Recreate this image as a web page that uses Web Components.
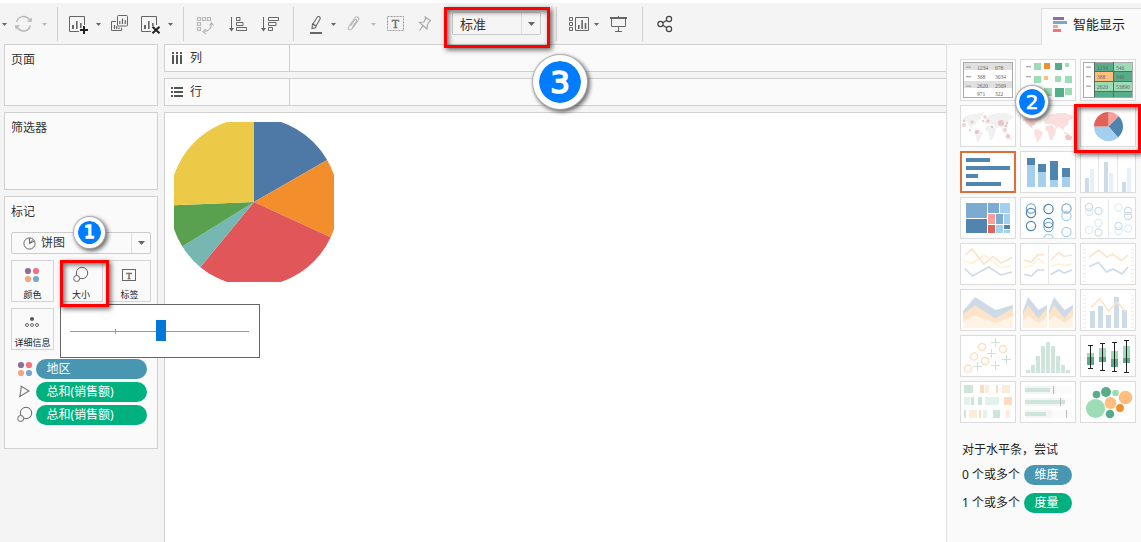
<!DOCTYPE html>
<html lang="zh-CN">
<head>
<meta charset="utf-8">
<title>工作表</title>
<style>
html,body{margin:0;height:100%;overflow:hidden;background:#f4f4f4}
body{font:12px/18px "Noto Sans","Noto Sans CJK SC",sans-serif;color:#333}
</style>
</head>
<body>
<viz-app></viz-app>
<script>
const define = (name, html, setup) => customElements.define(name, class extends HTMLElement {
  constructor() {
    super();
    const t = document.createElement('template');
    t.innerHTML = html;
    this.attachShadow({mode: 'open'}).append(t.content.cloneNode(true));
  }
  connectedCallback() { if (setup) setup(this, this.shadowRoot); }
});

/* ---------- toolbar icons: drawn in toolbar coordinates, [x, width, markup] ---------- */
const G = '#666', L = '#b9b9b9';
const caret = (x, c) => `<path d="M${x} 23h5l-2.500 3z" fill="${c}"/>`;
const s = (c, w = 1) => `fill="none" stroke="${c}" stroke-width="${w}"`;
const ICONS = {
  more: [0, 8, caret(2, G)],
  refresh: [14, 19, `<path d="M16.7 22a7 7 0 0 1 12.7-2.3M30.3 25.5a7 7 0 0 1-12.8 2.2" ${s(L, 1.5)}/><path d="M27 22l5.3-.5-1-4zM20 25l-5.3.5 1.2 4z" fill="${L}"/>`],
  caretL1: [42, 5, caret(42, L)],
  newSheet: [68, 21, `<path d="M79 31.5h-9.500v-15h15v8.500" ${s(G)}/><path d="M72 25h2v4h-2zM76 21h1.600v8H76zM80 23h1.600v5H80z" fill="${G}"/><path d="M84 26v8M80 30h8" ${s('#222', 2)}/>`],
  caret1: [96, 5, caret(96, G)],
  duplicate: [110, 19, `<path d="M116 21.500h-4.500v9h10v-3" ${s(G)}/><rect x="117.500" y="15.500" width="10" height="10.500" rx="1" ${s(G)}/><path d="M119.800 21v3M122.500 18.500v5.500M125.300 20v4M114.500 25v4M116.700 26v3M119 27.500v1.500" ${s(G, 1.2)}/>`],
  clear: [140, 21, `<path d="M151 31.500h-9.500v-15h15v8.500" ${s(G)}/><path d="M144 25h2v4h-2zM148 21h1.600v8H148zM152 23h1.600v3H152z" fill="${G}"/><path d="M152.500 26.800l7 6.500M159.500 26.800l-7 6.500" ${s('#222', 2)}/>`],
  caret2: [168, 5, caret(168, G)],
  swap: [196, 19, `<path d="M197.500 17.500h3v3h-3zM202.500 17.500h3v3h-3zM207.500 17.500h3v3h-3zM197.500 22.500h3v3h-3zM197.500 27.500h3v3h-3zM211.500 23.500q0 7-7 8M209.500 25.500l2-3 2 3M206 29l-3 2.500 3 2.500" ${s(L, 1.2)}/>`],
  asc: [228, 20, `<path d="M231.500 17v12" ${s(G)}/><path d="M229 28h5l-2.500 3.500z" fill="${G}"/><path d="M236.500 17.500h3.500v3h-3.500zM236.500 22.500h6.500v3h-6.500zM236.500 27.500h10v3h-10z" ${s(G)}/>`],
  desc: [260, 20, `<path d="M263.500 17v12" ${s(G)}/><path d="M261 28h5l-2.500 3.500z" fill="${G}"/><path d="M268.500 17.500h10v3h-10zM268.500 22.500h7.500v3h-7.500zM268.500 27.500h4v3h-4z" ${s(G)}/>`],
  pen: [309, 14, `<path d="M313 24l4-6.500q1-1.500 2.500-.7 1.300 1 .5 2.400l-4 6.800zM312.500 24l3.500 2.200-.5 1.500-3.500.8z" ${s(G, 1.1)}/><path d="M310 33h12" ${s(G, 2)}/>`],
  caret3: [331, 5, caret(331, G)],
  clip: [346, 15, `<path d="M356.500 22l-4.500 6.500q-1.500 2-3 1-1.500-1.200-.2-3l6-8.500q1.500-2 3.200-.8 1.600 1.200.2 3.300l-6 8.300M350.500 26l4.300-6q.8-1 1.500-.4.800.6.100 1.600l-4 5.600" ${s(L, 1.1)}/>`],
  caretL2: [371, 5, caret(371, L)],
  label: [387, 17, `<rect x="387.500" y="16.500" width="16" height="14" ${s('#999')} stroke-dasharray="2 1"/><text x="395.500" y="28" text-anchor="middle" font-family="Liberation Serif,serif" font-size="12" fill="#666" stroke="#666" stroke-width=".3">T</text>`],
  pin: [418, 14, `<path d="M424.500 16.500l6.500 4.500M426 17.500l-2 4.500-4.500.5 7.500 6.500.5-4.500 2.700-4M423 25.500l-3.300 5" ${s('#aaa', 1.2)}/>`],
  cards: [568, 22, `<path d="M569.500 17.500h3v3h-3zM569.500 22.500h3v3h-3zM569.500 27.500h3v3h-3zM575.500 17.500h13v13h-13z" ${s(G)}/><path d="M578 25h1.600v4H578zM581.300 20h1.600v9h-1.600zM584.700 23h1.600v6h-1.600z" fill="${G}"/>`],
  caret4: [594, 5, caret(594, G)],
  present: [610, 18, `<path d="M610 18h17" ${s(G, 2)}/><path d="M611.500 18v8.500h14V18M618.500 17v-1M618.500 26.500v5M615 31.500h7" ${s(G)}/>`],
  share: [656, 17, `<circle cx="660.500" cy="24" r="2.600" ${s('#444', 1.2)}/><circle cx="669" cy="19" r="2.600" ${s('#444', 1.2)}/><circle cx="669" cy="29" r="2.600" ${s('#444', 1.2)}/><path d="M662.800 22.700l4-2.400M662.800 25.300l4 2.400" ${s('#444', 1.2)}/>`]
};
define('tool-icon', '<style>:host{display:block;flex:none;height:24px}svg{display:block}</style>', (el, r) => {
  const [x, w, m] = ICONS[el.getAttribute('name')];
  r.innerHTML += `<svg width="${w}" height="24" viewBox="${x} 12 ${w} 24">${m}</svg>`;
});
define('tool-sep', '<style>:host{display:block;flex:none;width:1px;height:34px;background:#d0d0d0}</style>');

define('drop-down', `<style>
:host{display:flex;box-sizing:border-box;border:1px solid #ccc;border-radius:2px;background:var(--bg,#f5f5f5);align-items:center}
.v{flex:1;display:flex;align-items:center}
.b{align-self:stretch;width:18px;border-left:1px solid #dcdcdc;display:flex;align-items:center;justify-content:center}
svg{display:block}</style>
<div class="v"><slot></slot></div><div class="b"><svg width="7" height="4"><path d="M0 0h7l-3.500 4z" fill="#666"/></svg></div>`);

define('tool-bar', `<style>
:host{display:flex;box-sizing:border-box;height:44px;border-top:3px solid #fff;background:#f4f4f4;align-items:center;position:relative;z-index:1}
drop-down{width:89px;height:23px;margin-left:20px;font-size:13px;color:#333}
drop-down span{padding-left:7px}
.tab{margin-left:auto;align-self:flex-end;width:100px;height:37px;margin-bottom:-1px;box-sizing:border-box;border:solid #ddd;border-width:1px 0 0 1px;background:#fafafa;display:flex;align-items:center;padding:0 0 6px 10px;font-size:13px;color:#222}
.tab svg{margin-top:1px}
.tab span{margin-left:6px;white-space:nowrap}
</style>
<tool-icon name="more"></tool-icon>
<tool-icon name="refresh" style="margin-left:6px"></tool-icon>
<tool-icon name="caretL1" style="margin-left:9px"></tool-icon>
<tool-sep style="margin-left:10px"></tool-sep>
<tool-icon name="newSheet" style="margin-left:10px"></tool-icon>
<tool-icon name="caret1" style="margin-left:7px"></tool-icon>
<tool-icon name="duplicate" style="margin-left:9px"></tool-icon>
<tool-icon name="clear" style="margin-left:11px"></tool-icon>
<tool-icon name="caret2" style="margin-left:7px"></tool-icon>
<tool-sep style="margin-left:10px"></tool-sep>
<tool-icon name="swap" style="margin-left:12px"></tool-icon>
<tool-icon name="asc" style="margin-left:13px"></tool-icon>
<tool-icon name="desc" style="margin-left:12px"></tool-icon>
<tool-sep style="margin-left:13px"></tool-sep>
<tool-icon name="pen" style="margin-left:15px"></tool-icon>
<tool-icon name="caret3" style="margin-left:8px"></tool-icon>
<tool-icon name="clip" style="margin-left:10px"></tool-icon>
<tool-icon name="caretL2" style="margin-left:10px"></tool-icon>
<tool-icon name="label" style="margin-left:11px"></tool-icon>
<tool-icon name="pin" style="margin-left:14px"></tool-icon>
<drop-down><span>标准</span></drop-down>
<tool-sep style="margin-left:15px"></tool-sep>
<tool-icon name="cards" style="margin-left:11px"></tool-icon>
<tool-icon name="caret4" style="margin-left:4px"></tool-icon>
<tool-icon name="present" style="margin-left:11px"></tool-icon>
<tool-sep style="margin-left:14px"></tool-sep>
<tool-icon name="share" style="margin-left:13px"></tool-icon>
<div class="tab"><svg width="15" height="16"><path d="M1 0h11v3H1z" fill="#8b6f99"/><path d="M1 4h14v3H1z" fill="#7ea6cd"/><path d="M1 8h5v3H1z" fill="#f5a67c"/><path d="M1 12h8v3H1z" fill="#fa6e82"/></svg><span>智能显示</span></div>`);

define('side-card', `<style>:host{display:block;box-sizing:border-box;border:1px solid #d0d0d0;background:#fafafa;padding:6px}</style><slot></slot>`);

define('field-pill', `<style>:host{display:block;box-sizing:border-box;height:20px;border-radius:10px;background:#4996b2;color:#fff;line-height:19px;padding:0 10.5px}
:host([kind=measure]){background:#00b180}</style><slot></slot>`);

/* ---------- marks card ---------- */
const dots = `<circle cx="4" cy="4" r="3.100" fill="#8b6f99"/><circle cx="12" cy="4" r="3.100" fill="#fa6e82"/><circle cx="4" cy="12" r="3.100" fill="#f5a67c"/><circle cx="12" cy="12" r="3.100" fill="#7ea6cd"/>`;
const MARKS = {
  color: dots,
  size: `<circle cx="9" cy="6" r="5.700" ${s('#666')}/><circle cx="3.700" cy="11.500" r="3" fill="#fafafa" stroke="#666"/>`,
  label: `<rect x="1.500" y="2.500" width="13" height="11" ${s('#666')}/><text x="8" y="11.500" text-anchor="middle" font-family="Liberation Serif,serif" font-size="9" fill="#555" stroke="#555" stroke-width=".3">T</text>`,
  detail: `<circle cx="8" cy="4" r="2" fill="#555"/><g ${s('#666')}><circle cx="3" cy="10" r="1.500"/><circle cx="8" cy="10" r="1.500"/><circle cx="13" cy="10" r="1.500"/></g>`,
  angle: `<path d="M4.200 2.300L12 7 2.700 12.500q1.500-5 1.500-10.200z" ${s('#777', 1.1)}/>`
};
define('mark-icon', '<style>:host{display:block;width:17px;height:16px}svg{display:block;overflow:visible}</style>', (el, r) => {
  r.innerHTML += `<svg width="17" height="16">${MARKS[el.getAttribute('name')]}</svg>`;
});
define('mark-button', `<style>:host{display:flex;flex-direction:column;align-items:center;box-sizing:border-box;width:43px;height:42px;border:1px solid #d4d4d4;padding-top:6px;font-size:9px;line-height:12px;color:#222;white-space:nowrap}
mark-icon{margin-bottom:6px}</style><mark-icon></mark-icon><slot></slot>`,
  (el, r) => {
    const i = document.createElement('mark-icon');
    i.setAttribute('name', el.getAttribute('icon'));
    r.querySelector('mark-icon').replaceWith(i);
  });
define('marks-card', `<style>
:host{display:block}
drop-down{width:140px;height:22px;margin:11px 0 6px;--bg:#fafafa}
drop-down svg{margin:0 5px 0 11px}
.g{display:grid;grid-template-columns:repeat(3,43px);justify-content:space-between;row-gap:6px;width:140px}
.p{display:grid;grid-template-columns:18px 111px;column-gap:1px;row-gap:3px;margin:9px 0 0 6px;align-items:center}
</style>
<div>标记</div>
<drop-down><svg width="13" height="13"><circle cx="6.500" cy="6.500" r="5.600" ${s('#666')}/><path d="M6.500 6.500V1M6.500 6.500L11.500 4M6.500 6.500L10 2.500" ${s('#666')}/></svg>饼图</drop-down>
<div class="g"><mark-button icon="color">颜色</mark-button><mark-button icon="size">大小</mark-button><mark-button icon="label">标签</mark-button><mark-button icon="detail">详细信息</mark-button></div>
<div class="p"><mark-icon name="color"></mark-icon><field-pill>地区</field-pill>
<mark-icon name="angle"></mark-icon><field-pill kind="measure">总和(销售额)</field-pill>
<mark-icon name="size"></mark-icon><field-pill kind="measure">总和(销售额)</field-pill></div>`);

/* ---------- sheet ---------- */
define('shelf-row', `<style>:host{display:flex;box-sizing:border-box;height:28px;border:1px solid #d0d0d0;border-right:0;background:#fafafa}
.l{box-sizing:border-box;width:125px;border-right:1px solid #d0d0d0;display:flex;align-items:center;gap:7px;padding-left:6px}svg{display:block}</style>
<div class="l"><svg width="12" height="12"></svg><slot></slot></div>`, (el, r) => {
  r.querySelector('svg').innerHTML = `<path fill="#555" d="${el.getAttribute('kind') === 'columns'
    ? 'M1 0h2v2H1zM1 3h2v9H1zM5 0h2v2H5zM5 3h2v9H5zM9 0h2v2H9zM9 3h2v9H9z'
    : 'M0 1h2v2H0zM3 1h9v2H3zM0 5h2v2H0zM3 5h9v2H3zM0 9h2v2H0zM3 9h9v2H3z'}"/>`;
});
define('pie-chart', `<style>:host{display:block;width:160px;height:160px;overflow:hidden}svg{display:block}</style><svg width="160" height="160" viewBox="-80 -80 160 160"></svg>`, (el, r) => {
  const R = 84.4, cuts = [[0, -80], [73, -42], [76.7, 35.3], [-53.3, 64.7], [-71.3, 44.300], [-80, 3.300], [0, -80]];
  const fills = ['#4e79a7', '#f28e2b', '#e15759', '#76b7b2', '#59a14f', '#edc948'];
  const on = ([x, y]) => { const k = R / Math.hypot(x, y); return `${x * k} ${y * k}`; };
  r.querySelector('svg').innerHTML = fills.map((f, i) => `<path fill="${f}" d="M0 0L${on(cuts[i])}A${R} ${R} 0 0 1 ${on(cuts[i + 1])}z"/>`).join('');
});

/* ---------- chart type gallery ---------- */
const D = '#4f85af', M = '#7babd0', B = '#a5cfef', dg = '#57ad8a', lg = '#9edcb6', lo = '#ffbe7d';
const rc = (c, ...a) => a.map(([x, y, x2, y2]) => `<rect x="${x}" y="${y}" width="${x2 - x}" height="${y2 - y}" fill="${c}"/>`).join('');
const ci = (c, rad, ...a) => a.map(([x, y, q]) => `<circle cx="${x}" cy="${y}" r="${q || rad}" fill="${c}"/>`).join('');
const ring = (c, rad, ...a) => a.map(([x, y]) => `<circle cx="${x}" cy="${y}" r="${rad}" fill="none" stroke="${c}" stroke-width="1.200"/>`).join('');
const ln = (c, p, w = 1.600) => `<polyline points="${p}" fill="none" stroke="${c}" stroke-width="${w}"/>`;
const pg = (c, p) => `<polygon points="${p}" fill="${c}"/>`;
const tx = (...a) => a.map(([x, y, t]) => `<text x="${x}" y="${y}" font-family="Liberation Serif,serif" font-size="5.500" fill="#666">${t}</text>`).join('');
const dash = ys => ys.map(y => rc('#aaa', [6, y, 11, y + 1.300])).join('');
const land = c => `<g fill="${c}"><path d="M3 13l5-3 8-1 6 1-1 4-4 2-2 4-3 1 1 3-3-2-3-5-4-1z"/><path d="M15 24l5 1 3 3-2 4-3 5-1 1-1-6-2-4z"/><path d="M18 8l6-1-1 4-3 1z"/><path d="M26 14l3-4 4-1 5-1 7 0 8 3-1 3-3 1-1 5-4 2-1 4-2-3-2-2-2 3-3-4-4-1-5 0-1-3z"/><path d="M26 21l6-1 4 4-1 5-3 6-2 0-2-8-3-2z"/><path d="M45 31l3-2 4 3-1 3-5 0z"/><path d="M43 26l5 2 1 1-4 0z"/></g>`;
const ticks = `<path d="M4.500 6v33M52.500 6v33" stroke="#eee" stroke-width="3" stroke-dasharray="1 3"/>`;
const bc = '#cddbe8', oc = '#fde3c8', yc = '#fff1d6';
const box = (x, lo1, m, h, a, b) => rc(lg, [x, lo1, x + 7, m]) + rc(dg, [x, m, x + 7, h]) + `<path d="M${x + 3.5} ${a}V${b}M${x + 1} ${a}h5M${x + 1} ${b}h5" stroke="#222" fill="none"/>`;
const g1 = '#cde5db', g2 = '#e3f2ea', o1 = '#fbdcc0', o2 = '#ffecd8';
const areas = (x, k) => [[bc, [22, 8, 21, 16]], [oc, [25, 16, 29.500, 19]], ['#fef3e5', [32, 26.500, 34, 27]]].map(([c, y]) =>
  pg(c, `${x},${y[0]} ${x + 5 * k},${y[1]} ${x + (k > 1 ? 32.5 : 15.5)},${y[2]} ${x + (k > 1 ? 50 : 24)},${y[3]} ${x + (k > 1 ? 50 : 24)},39 ${x},39`)).join('');
const CHARTS = [
  rc('#e0e0e0', [3, 4, 52, 11], [3, 22, 52, 29]) + `<rect x="3.500" y="3.500" width="49" height="35" ${s('#aaa')}/>` + dash([7.5, 17, 26.5]) + tx([17, 10.5, '1234'], [35, 10.5, '678'], [17, 19.5, '368'], [35, 19.5, '3034'], [17, 28.5, '2620'], [35, 28.5, '2569'], [17, 36.5, '971'], [35, 36.5, '322']),
  dash([7, 17, 27]) + rc(lg, [14, 4, 21, 11], [45, 4, 49, 8], [14, 17, 21, 24], [35, 17, 41, 23], [45, 17, 52, 24], [14, 29, 20, 35], [24, 29, 32, 37], [45, 29, 52, 36]) + rc('#f28e2b', [24, 4, 30, 10]) + rc(lo, [24, 17, 28, 21]) + rc(dg, [35, 4, 42, 11], [35, 29, 44, 38]),
  rc(dg, [14, 4, 33, 13], [33, 13, 52, 22], [14, 32, 52, 38]) + rc(lg, [33, 4, 52, 13], [14, 22, 52, 32]) + rc(lo, [14, 13, 33, 22]) + `<rect x="3.500" y="3.500" width="49" height="35" ${s('#aaa')}/><path d="M14.500 3v35M33.500 3v35M14 12.500h38M14 22.500h38M14 32.500h38" ${s('#5c6b62')}/>` + dash([7.5, 17, 26.5]) + tx([17, 10.5, '1234'], [36, 10.5, '546'], [17, 20, '368'], [36, 20, '340'], [17, 29.5, '2620'], [36, 29.5, '53890']),
  land('#f1f1f1') + `<g opacity=".3">` + ci('#d9636b', 1.6, [4, 20, 2.1], [12, 17], [10, 25, 1.200], [17, 27, 2.1], [25, 12, 1.800], [28, 16], [23, 16, 1.200], [32, 22, 1.200], [41, 18, 3], [46, 21], [47, 18, 1.200], [45, 25, 2], [48, 31, 2], [4, 16, 1.300]) + '</g>',
  land('#fbdfdf') + pg('#f5c9c9', '4,13 9,12 15,19 11,22 6,18') + pg('#f3c6c6', '45,31 48,29 52,32 51,35 46,35'),
  `<g transform="translate(28.500 21.500)"><path d="M0 0V-14.500A14.500 14.500 0 0 1 10.250-10.250z" fill="#ff9d9a"/><path d="M0 0L10.250-10.250A14.500 14.500 0 0 1 9.500 11z" fill="${D}"/><path d="M0 0L9.500 11A14.500 14.500 0 0 1-14.500 0z" fill="${B}"/><path d="M0 0H-14.500A14.500 14.500 0 0 1 0-14.500z" fill="#e0635a"/></g>`,
  rc(D, [6, 7, 30, 11], [6, 15, 50, 19], [6, 23, 18, 27], [6, 31, 41, 35]),
  rc(D, [7, 7, 15, 14], [18, 13, 26, 21], [30, 10, 38, 29], [42, 17, 50, 26]) + rc(B, [7, 14, 15, 36], [18, 21, 26, 36], [30, 29, 38, 36], [42, 26, 50, 36]),
  rc(bc, [5, 27, 9, 41], [24, 11, 28, 41], [42, 31, 46, 41]) + rc('#e4f1fb', [10, 18, 14, 41], [29, 22, 33, 41], [47, 17, 51, 41]) + rc('#e8e8e8', [18, 2, 19, 41], [37, 2, 38, 41]),
  rc(M, [6, 6, 27, 21], [28, 6, 39, 16], [36, 17, 43, 27]) + rc(D, [6, 22, 27, 36], [44, 28, 50, 32]) + rc(B, [40, 6, 50, 16], [44, 17, 50, 27], [36, 28, 43, 36], [44, 33, 50, 36]) + rc('#ff9d9a', [28, 17, 35, 27]) + rc('#e0635a', [28, 28, 35, 36]),
  ring(M, 4.6, [11, 11.5], [28.5, 30], [46.5, 11.5]) + ring(D, 4.6, [11, 16], [11, 29], [28.5, 12], [28.5, 26]) + ring(B, 4.6, [28.5, 42], [46.5, 19], [46.5, 35]),
  ring('#dcecf8', 3.6, [9, 15], [18.5, 26], [9, 33], [38.5, 10.5], [38.5, 34], [48, 31.5]) + ring(bc, 3.6, [9, 10], [18.5, 14], [18.5, 35.5], [48, 14], [48, 19], [38.5, 29]) + rc('#e8e8e8', [28, 2, 29, 41]),
  ln(yc, '4,17.500 12,20.500 24,12 41,25 51,23') + ln(oc, '5.500,12 12,6 24,21 33,13.500 41,20 52,14.500') + ln(bc, '4.500,25.500 12.500,33 28.500,24 41,32 52,29'),
  ln(oc, '4,17 11.500,19 18,11.500 24,12') + ln(yc, '4,24 11,23 18,15.500 24,20') + ln(bc, '4,31.500 11.500,33 17.500,27 24.500,27') + rc('#e8e8e8', [28, 2, 29, 41]) + ln(oc, '31,17 38.500,9.500 44,13.500 52,12') + ln(yc, '31,23.500 38.500,21 45,22.500 52,21') + ln(bc, '31,31.500 38.500,27 44,30 52,27'),
  ticks + ln(oc, '9,14.500 18.500,7 27,14 32.500,11 41.500,17.500 48,12') + ln(bc, '9,23.500 18.500,19.500 26.500,29 33,26 42,31 48,24'),
  areas(3, 2.4),
  areas(3, 1) + areas(29, 1),
  ticks + rc(bc, [10, 22, 15, 39], [18, 17, 23, 39], [26, 26, 31, 39], [34, 8, 39, 39], [42, 21, 47, 39]) + ln(oc, '11,18.500 20,9.500 28.500,22.500 37,13 46,23'),
  ring('#fddfc0', 3.6, [22, 12], [43, 14], [14, 21.5], [25, 26], [8, 33.5]).replace(/1\.200/g, '1.500') + `<path d="${[[35.5, 7.5], [31.5, 18.5], [17.5, 31.5], [35.5, 30.5], [46.5, 24.5]].map(([x, y]) => `M${x - 4.5} ${y}h9M${x} ${y - 4.5}v9`).join('')}" ${s('#c9e4d8')}/>`,
  rc(g1, ...[35, 30, 21, 11, 7, 11, 21, 30, 35].map((y, i) => [6 + i * 5, y, 10 + i * 5, 38])),
  box(7, 18, 22, 30, 10.5, 33.5) + box(19, 13, 22, 27, 8.5, 35.5) + box(31, 16, 24, 32, 7.5, 36.5) + box(43, 11, 23, 28, 5.5, 37.5),
  rc(g1, [4, 4, 13, 12], [11, 16, 14, 24], [18, 16, 22, 24], [4, 29, 6, 37], [33, 29, 40, 37]) + rc(g2, [4, 16, 10, 24], [25, 16, 39, 24], [23, 29, 27, 37]) + rc(o1, [20, 4, 24, 12], [36, 4, 38, 12], [44, 16, 52, 24], [19, 29, 21, 37]) + rc(o2, [25, 4, 29, 12], [42, 4, 50, 12], [9, 29, 17, 37], [46, 29, 50, 37]),
  rc('#fbfbfb', [5, 5, 52, 13], [5, 17, 52, 25], [5, 29, 52, 37]) + rc('#f5f5f5', [5, 5, 36, 13], [5, 17, 44, 25], [5, 29, 32, 37]) + rc(g1, [5, 7, 30, 11], [5, 19, 45, 23], [5, 31, 26, 35]) + rc('#bbb', [33, 5, 34, 13], [40, 17, 41, 25], [46, 29, 47, 37]),
  ci(lg, 3.3, [15.5, 27.5, 9.6], [35.5, 12]) + ci(dg, 3.8, [16.5, 13.5], [26, 11, 5], [30, 33, 4.300]) + ci(lo, 6, [45.5, 16.5, 6.8], [30.5, 22, 5.9]) + ci('#f28e2b', 3.9, [40, 27])
];
define('chart-thumb', `<style>:host{display:block;box-sizing:border-box;width:56px;height:42px;border:1px solid #dcdcdc;background:#fff}
:host([selected]){box-shadow:inset 0 0 0 1px #dd6f37;border-color:#dd6f37}svg{display:block}</style>`, (el, r) => {
  r.innerHTML += `<svg width="54" height="40" viewBox="1 1 54 40">${CHARTS[+el.getAttribute('type')]}</svg>`;
});
define('show-me', `<style>
:host{display:block;box-sizing:border-box;border:solid #ddd;border-width:1px 0 0 1px;background:#fafafa;padding:14px 0 0 13px;color:#222}
.g{display:grid;grid-template-columns:repeat(3,56px);gap:4px}
.t{margin:18px 0 0 2px}.r{display:flex;align-items:center;gap:4px;margin:6px 0 0 2px;height:20px}.r+.r{margin-top:8px}
.r span{width:58px;white-space:nowrap}field-pill{width:48px}
</style><div class="g"></div><div class="t">对于水平条，尝试</div>
<div class="r"><span>0 个或多个</span><field-pill>维度</field-pill></div>
<div class="r"><span>1 个或多个</span><field-pill kind="measure">度量</field-pill></div>`, (el, r) => {
  r.querySelector('.g').innerHTML = CHARTS.map((_, i) => `<chart-thumb type="${i}"${i === 6 ? ' selected' : ''}></chart-thumb>`).join('');
});

/* ---------- overlays ---------- */
define('size-slider', `<style>:host{display:block;box-sizing:border-box;width:200px;height:54px;border:1px solid #666;background:#fff}svg{display:block}</style>
<svg width="198" height="52"><path d="M9 26.500h179M54.500 24v5" stroke="#999"/><rect x="95" y="15" width="10" height="21" fill="#0078d7"/></svg>`);
define('red-frame', `<style>:host{display:block;box-sizing:border-box;border:3px solid #f00;box-shadow:2px 2px 5px rgba(0,0,0,.6),inset 2px 2px 5px rgba(0,0,0,.55)}</style>`);
define('step-badge', `<style>:host{display:flex;box-sizing:border-box;width:var(--d);height:var(--d);border-radius:50%;border:var(--w) solid #fff;background:#007dff;background-clip:padding-box;box-shadow:0 0 1px 1px #aaa,2px 2px 4px 1px rgba(0,0,0,.6);align-items:center;justify-content:center;color:#fff;font:var(--f)/1 "DejaVu Sans",sans-serif;-webkit-text-stroke:var(--s,1px) #fff}</style><slot></slot>`);

define('viz-app', `<style>
:host{display:grid;grid-template-rows:44px 1fr;width:1141px;height:542px;position:relative;overflow:hidden;background:#f4f4f4}
.body{display:grid;grid-template-columns:164px 782px 195px;min-height:0}
.left{padding:0 6px 0 4px;display:flex;flex-direction:column;gap:6px}
.mid{display:flex;flex-direction:column;gap:6px}
.sheet{flex:1;border:solid #d0d0d0;border-width:1px 0 0 1px;background:#fff;padding:9px}
.o{position:absolute;z-index:2}
</style>
<tool-bar></tool-bar>
<div class="body">
<div class="left"><side-card style="height:62px">页面</side-card><side-card style="height:78px">筛选器</side-card><side-card style="height:253px"><marks-card></marks-card></side-card></div>
<div class="mid"><shelf-row kind="columns">列</shelf-row><shelf-row kind="rows">行</shelf-row><div class="sheet"><pie-chart></pie-chart></div></div>
<show-me></show-me>
</div>
<size-slider class="o" style="left:60px;top:304px"></size-slider>
<red-frame class="o" style="left:60px;top:260px;width:49px;height:47px"></red-frame>
<red-frame class="o" style="left:1074px;top:104px;width:67px;height:49px"></red-frame>
<red-frame class="o" style="left:444px;top:7px;width:106px;height:41px"></red-frame>
<step-badge class="o" style="left:74px;top:217px;--d:31px;--w:4px;--f:17px;--s:1.3px">1</step-badge>
<step-badge class="o" style="left:1016px;top:86px;--d:32px;--w:3px;--f:20px;--s:.6px">2</step-badge>
<step-badge class="o" style="left:533px;top:55px;--d:54px;--w:6px;--f:31px;--s:1.6px">3</step-badge>`);
</script>
</body>
</html>
